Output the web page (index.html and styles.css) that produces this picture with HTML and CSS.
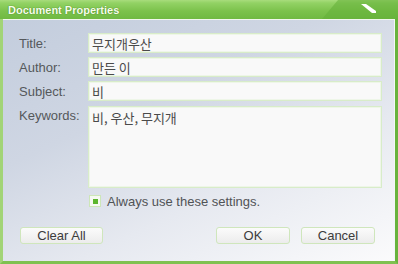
FILE: index.html
```html
<!DOCTYPE html>
<html>
<head>
<meta charset="utf-8">
<link rel="stylesheet" href="styles.css">
</head>
<body>
<div class="window">
  <div class="titlebar">
    <span class="title">Document Properties</span>
    <svg class="title-deco" width="90" height="19" viewBox="0 0 90 19">
      <polygon points="14,19 30,0 90,0 90,19" fill="#62ae37" opacity="0.55"/>
      <path d="M53,4 L58,4 L68,11 L68,13 L64,13 Z" fill="#ffffff"/>
    </svg>
  </div>
  <div class="content">
    <div class="form">
      <div class="lbl">Title:</div><div class="field">무지개우산</div>
      <div class="lbl">Author:</div><div class="field">만든 이</div>
      <div class="lbl">Subject:</div><div class="field">비</div>
      <div class="lbl lbl-top">Keywords:</div><div class="field field-area">비, 우산, 무지개</div>
    </div>
    <div class="check-row">
      <span class="checkbox"><span class="mark"></span></span>
      <span class="check-text">Always use these settings.</span>
    </div>
    <div class="buttons">
      <div class="btn btn-clear">Clear All</div>
      <div class="spacer"></div>
      <div class="btn">OK</div>
      <div class="btn">Cancel</div>
    </div>
  </div>
</div>
</body>
</html>
```

FILE: styles.css
```css
html, body {
  margin: 0;
  padding: 0;
  background: #ffffff;
}
.window {
  width: 398px;
  height: 264px;
  box-sizing: border-box;
  border-left: 3px solid #a2d477;
  border-right: 3px solid #68b33d;
  border-bottom: 3px solid #7fc150;
  display: flex;
  flex-direction: column;
  font-family: "Liberation Sans", "Noto Sans CJK KR", sans-serif;
}
.titlebar {
  position: relative;
  height: 19px;
  margin: 0 -3px;
  background: linear-gradient(#a8dc7c 0, #92d264 3px, #7cc24c 11px, #70b942 19px);
  display: flex;
  align-items: center;
  flex-shrink: 0;
}
.title {
  padding-left: 8px;
  font-family: "Liberation Sans", sans-serif;
  font-weight: bold;
  font-size: 11px;
  color: #f6fdea;
  text-shadow: 0 0 1px #4f8f2a, 0 0 1px #4f8f2a;
}
.title-deco {
  position: absolute;
  right: 0;
  top: 0;
}
.content {
  flex: 1;
  border-top: 1px solid #f2f7ee;
  border-right: 1px solid #f4f6f9;
  background: linear-gradient(155deg, #c3cddd 0%, #cfd6e3 35%, #e6e9f0 65%, #fbfbfc 100%);
  padding: 13px 12px 0 16px;
}
.form {
  display: grid;
  grid-template-columns: 69px 1fr;
  grid-template-rows: 20px 20px 20px 83px;
  row-gap: 4px;
}
.lbl {
  font-size: 13px;
  color: #55585b;
  display: flex;
  align-items: center;
}
.lbl-top {
  align-items: flex-start;
  padding-top: 2px;
  margin-top: 1px;
}
.field {
  box-sizing: border-box;
  background: #f9f9f9;
  border: 1px solid #d8ecc9;
  box-shadow: inset 0 0 0 1px #eef6e8;
  padding: 0 3px;
  font-family: "Noto Sans CJK KR", sans-serif;
  font-size: 13px;
  color: #4a4a4a;
  display: flex;
  align-items: center;
}
.field-area {
  align-items: flex-start;
  padding-top: 1px;
  margin-top: 1px;
}
.check-row {
  display: flex;
  align-items: center;
  margin-top: 6px;
  margin-left: 70px;
  height: 14px;
}
.checkbox {
  box-sizing: border-box;
  width: 12px;
  height: 12px;
  border: 1px solid #cde6b8;
  background: #f6f9f2;
  display: flex;
  align-items: center;
  justify-content: center;
}
.mark {
  width: 5px;
  height: 5px;
  background: #5cb62e;
}
.check-text {
  margin-left: 6px;
  font-size: 13px;
  color: #505356;
}
.buttons {
  display: flex;
  margin-top: 19px;
  padding-left: 1px;
  padding-right: 7px;
  gap: 11px;
}
.spacer {
  flex: 1;
}
.btn {
  box-sizing: border-box;
  width: 74px;
  height: 17px;
  border: 1px solid #cfe6bc;
  border-radius: 3px;
  background: linear-gradient(#fbfbfb, #ececec);
  font-size: 13px;
  color: #3c3c3c;
  display: flex;
  align-items: center;
  justify-content: center;
}
.btn-clear {
  width: 83px;
}
```
